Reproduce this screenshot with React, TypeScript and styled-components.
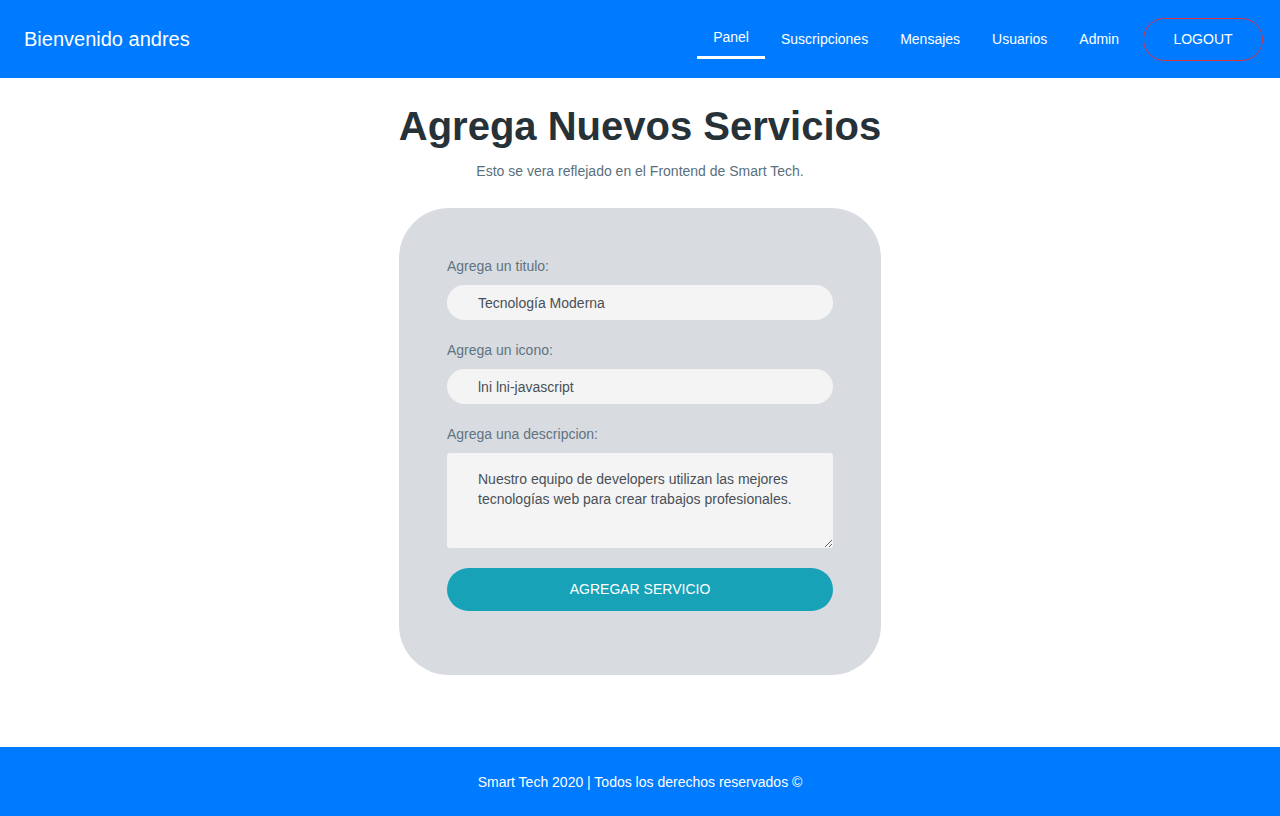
import React from "react";
import styled, { createGlobalStyle } from "styled-components";

const GlobalStyle = createGlobalStyle`
  html, body {
    margin: 0;
    padding: 0;
    background: #ffffff;
    font-family: "Liberation Sans", Arial, sans-serif;
  }
  * {
    box-sizing: border-box;
  }
`;

const Page = styled.div`
  display: flex;
  flex-direction: column;
  min-height: 816px;
`;

const Header = styled.header`
  height: 78px;
  background-color: #007bff;
  display: flex;
  align-items: center;
  justify-content: space-between;
  padding: 0 17px 0 24px;
`;

const Brand = styled.div`
  color: #ffffff;
  font-size: 20px;
  padding-top: 1px;
`;

const Nav = styled.nav`
  align-self: stretch;
  display: flex;
  align-items: flex-start;
`;

const NavItem = styled.a<{ $active?: boolean }>`
  color: #ffffff;
  font-size: 14px;
  line-height: 20px;
  text-decoration: none;
  padding: 0 16px;
  margin-top: ${(p) => (p.$active ? "27px" : "29px")};
  padding-bottom: ${(p) => (p.$active ? "9px" : "0")};
  border-bottom: ${(p) => (p.$active ? "3px solid #ffffff" : "none")};
  cursor: pointer;
`;

const LogoutButton = styled.button`
  margin: 18px 0 0 8px;
  width: 120px;
  height: 43px;
  padding: 0 0 2px;
  border: 1px solid #dc3545;
  border-radius: 22px;
  background: transparent;
  color: #ffffff;
  font-family: "Liberation Sans", Arial, sans-serif;
  font-size: 14px;
  cursor: pointer;
`;

const Main = styled.main`
  flex: 1;
  display: flex;
  flex-direction: column;
  align-items: center;
  padding: 22px 0 72px;
`;

const Title = styled.h1`
  margin: 0;
  color: #263238;
  font-size: 40px;
  font-weight: 700;
  line-height: 52px;
`;

const Subtitle = styled.p`
  margin: 9px 0 0;
  color: #5a6f7c;
  font-size: 14px;
  line-height: 20px;
`;

const Card = styled.form`
  margin-top: 27px;
  width: 482px;
  background: #d8dbe0;
  border-radius: 50px;
  padding: 49px 48px 64px;
  display: flex;
  flex-direction: column;
`;

const Label = styled.label`
  color: #5f7380;
  font-size: 14px;
  line-height: 18px;
  margin-bottom: 10px;
`;

const TextInput = styled.input`
  width: 100%;
  height: 35px;
  border: none;
  border-radius: 18px;
  background: #f4f4f4;
  padding: 0 31px;
  color: #495057;
  font-family: "Liberation Sans", Arial, sans-serif;
  font-size: 14px;
  margin-bottom: 21px;
  outline: none;
`;

const TextArea = styled.textarea`
  width: 100%;
  height: 95px;
  border: none;
  border-radius: 3px;
  background: #f4f4f4;
  padding: 16px 31px;
  color: #495057;
  font-family: "Liberation Sans", Arial, sans-serif;
  font-size: 14px;
  line-height: 20px;
  margin: 0 0 20px;
  display: block;
  outline: none;
`;

const SubmitButton = styled.button`
  width: 100%;
  height: 43px;
  padding: 0 0 2px;
  border: none;
  border-radius: 22px;
  background: #17a2b8;
  color: #ffffff;
  font-family: "Liberation Sans", Arial, sans-serif;
  font-size: 14px;
  cursor: pointer;
`;

const Footer = styled.footer`
  height: 69px;
  background-color: #007bff;
  color: #ffffff;
  font-size: 14px;
  display: flex;
  align-items: center;
  justify-content: center;
`;

export default function App() {
  return (
    <Page>
      <GlobalStyle />
      <Header>
        <Brand>Bienvenido andres</Brand>
        <Nav>
          <NavItem $active>Panel</NavItem>
          <NavItem>Suscripciones</NavItem>
          <NavItem>Mensajes</NavItem>
          <NavItem>Usuarios</NavItem>
          <NavItem>Admin</NavItem>
          <LogoutButton type="button">LOGOUT</LogoutButton>
        </Nav>
      </Header>
      <Main>
        <Title>Agrega Nuevos Servicios</Title>
        <Subtitle>Esto se vera reflejado en el Frontend de Smart Tech.</Subtitle>
        <Card onSubmit={(e) => e.preventDefault()}>
          <Label>Agrega un titulo:</Label>
          <TextInput defaultValue="Tecnología Moderna" />
          <Label>Agrega un icono:</Label>
          <TextInput defaultValue="lni lni-javascript" />
          <Label>Agrega una descripcion:</Label>
          <TextArea defaultValue="Nuestro equipo de developers utilizan las mejores tecnologías web para crear trabajos profesionales." />
          <SubmitButton type="submit">AGREGAR SERVICIO</SubmitButton>
        </Card>
      </Main>
      <Footer>Smart Tech 2020 | Todos los derechos reservados ©</Footer>
    </Page>
  );
}
